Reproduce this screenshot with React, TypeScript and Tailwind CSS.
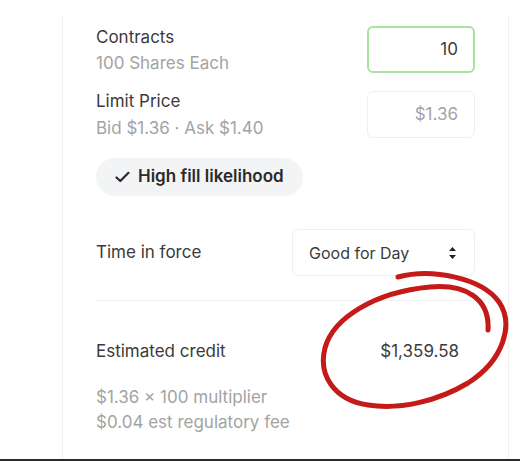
import React from "react";

export default function App() {
  return (
    <div className="relative w-[520px] h-[461px] bg-white flex flex-col overflow-hidden" style={{ fontFamily: "Inter, 'Noto Sans', sans-serif" }}>
      <div className="flex-1 ml-[62px] w-[447px] mt-[15px] border-x border-[#f0f0f0] px-[33px] pt-[11px] flex flex-col">
        <div className="flex items-center justify-between h-[47px]">
          <div className="flex flex-col text-[17px] leading-[26px]">
            <span className="text-[#3b3b3b]">Contracts</span>
            <span className="text-[#a3a3a3]">100 Shares Each</span>
          </div>
          <div className="w-[108px] h-[47px] rounded-[6px] border-2 border-[#a6e3a0] flex items-center justify-end pr-[15px] text-[17px] text-[#3b3b3b]">10</div>
        </div>
        <div className="flex items-center justify-between mt-[18px] h-[47px]">
          <div className="flex flex-col text-[17px] leading-[27px]">
            <span className="text-[#3b3b3b]">Limit Price</span>
            <span className="text-[#a3a3a3]">Bid $1.36 · Ask $1.40</span>
          </div>
          <div className="w-[108px] h-[47px] rounded-[6px] border border-[#efefef] flex items-center justify-end pr-[16px] text-[17px] text-[#a3a3a3]">$1.36</div>
        </div>
        <div className="mt-[20px] self-start h-[38px] w-[207px] rounded-full bg-[#f3f4f6] flex items-center pl-[19px] gap-[8px]">
          <svg width="15" height="12" viewBox="0 0 15 12" fill="none">
            <path d="M1.5 6.5 L5.3 10 L13.5 1.8" stroke="#2a2a2a" strokeWidth="2.2" strokeLinecap="round" strokeLinejoin="round" />
          </svg>
          <span className="text-[17px] font-semibold text-[#2a2a2a]">High fill likelihood</span>
        </div>
        <div className="flex items-center justify-between mt-[33px] h-[47px]">
          <span className="text-[17px] text-[#3b3b3b]">Time in force</span>
          <div className="w-[183px] h-[47px] rounded-[6px] border border-[#efefef] flex items-center justify-between pl-[16px] pr-[17px] text-[16px] text-[#3b3b3b]">
            <span>Good for Day</span>
            <svg width="9" height="14" viewBox="0 0 9 14">
              <path d="M4.5 1 L8 5 L1 5 Z" fill="#222" />
              <path d="M4.5 13 L8 9 L1 9 Z" fill="#222" />
            </svg>
          </div>
        </div>
        <div className="mt-[24px] h-px bg-[#f0f0f0]" />
        <div className="flex items-center justify-between mt-[38px] h-[26px] pr-[16px]">
          <span className="text-[17px] text-[#3b3b3b]">Estimated credit</span>
          <span className="text-[17px] text-[#3b3b3b]">$1,359.58</span>
        </div>
        <div className="flex flex-col mt-[20px] text-[17px] leading-[25px] text-[#a3a3a3]">
          <span>$1.36 × 100 multiplier</span>
          <span>$0.04 est regulatory fee</span>
        </div>
      </div>
      <div className="h-[2px] bg-[#2b2b2b]" />
      <svg className="absolute left-0 top-0 pointer-events-none" width="520" height="461" viewBox="0 0 520 461">
        <path
          d="M398 277 C432 268 482 278 499 302 C514 324 504 360 468 383 C438 401 400 410 368 405 C334 400 318 375 325 348 C333 318 375 292 430 287 C465 284 490 298 488 330"
          fill="none"
          stroke="#c41a18"
          strokeWidth="5"
          strokeLinecap="round"
        />
      </svg>
    </div>
  );
}
